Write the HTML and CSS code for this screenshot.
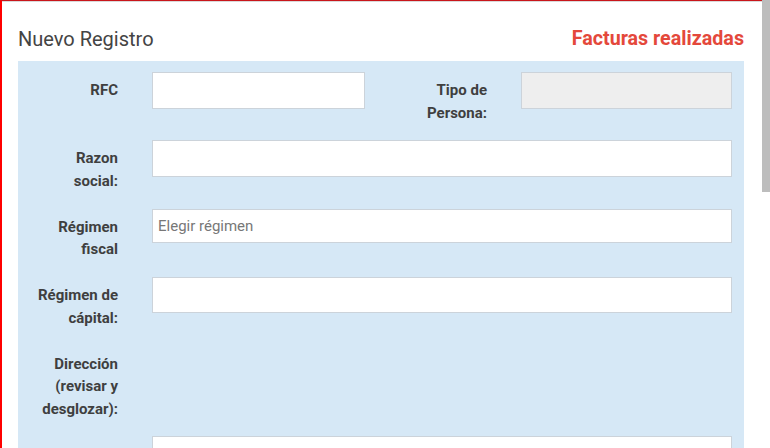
FILE: index.html
```html
<!DOCTYPE html>
<html lang="es">
<head>
<meta charset="utf-8">
<title>Nuevo Registro</title>
<link rel="stylesheet" href="styles.css">
</head>
<body>
<div class="page">
  <div class="frame">
    <div class="head">
      <h2 class="title">Nuevo Registro</h2>
      <a class="link" href="#">Facturas realizadas</a>
    </div>
    <form class="panel">
      <label class="lbl">RFC</label>
      <input class="field h37" type="text">
      <label class="lbl">Tipo de Persona:</label>
      <input class="field h37 disabled" type="text" disabled>

      <label class="lbl">Razon social:</label>
      <input class="field h37 wide" type="text">

      <label class="lbl">Régimen fiscal</label>
      <input class="field h34 wide" type="text" placeholder="Elegir régimen">

      <label class="lbl">Régimen de cápital:</label>
      <input class="field h36 wide" type="text">

      <label class="lbl">Dirección (revisar y desglozar):</label>
      <div class="wide"></div>

      <label class="lbl">Calle:</label>
      <input class="field h37 wide" type="text">

      <label class="lbl">Número exterior:</label>
      <input class="field h37 wide" type="text">

      <label class="lbl">Número interior:</label>
      <input class="field h37 wide" type="text">

      <label class="lbl">Colonia:</label>
      <input class="field h37 wide" type="text">
    </form>
  </div>
  <div class="scrollbar" aria-hidden="true">
    <div class="thumb"></div>
  </div>
</div>
</body>
</html>
```
FILE: styles.css
```css
html, body {
  margin: 0;
  padding: 0;
  height: 100%;
  overflow: hidden;
  background: #ffffff;
}

body {
  font-family: Roboto, "Liberation Sans", sans-serif;
  color: #444444;
}

.page {
  display: flex;
  width: 770px;
  height: 448px;
  overflow: hidden;
  background: #ffffff;
}

.frame {
  flex: 1;
  min-width: 0;
  border-left: 2px solid #ff0000;
  border-top: 1px solid #c9151b;
  box-shadow: inset 0 1px 0 #d9d9d9;
  padding: 26px 18px 0 16px;
}

.scrollbar {
  flex: 0 0 8px;
  background: #ffffff;
}

.thumb {
  height: 192px;
  background: #bdbdbd;
}

.head {
  display: flex;
  justify-content: space-between;
  align-items: center;
  height: 24px;
  margin: 0 0 10px 0;
}

.title {
  margin: 0;
  font-size: 20px;
  font-weight: 400;
  line-height: 24px;
  color: #444444;
}

.link {
  font-size: 19.7px;
  font-weight: 700;
  line-height: 24px;
  color: #e4483b;
  text-decoration: none;
}

.panel {
  display: grid;
  grid-template-columns: 100px 213px 88px 211px;
  column-gap: 34px;
  row-gap: 16.4px;
  align-items: start;
  background: #d6e8f6;
  padding: 11px 12px 20px 0;
  margin: 0;
}

.lbl {
  box-sizing: border-box;
  padding: 7px 0 0 15px;
  font-size: 15px;
  font-weight: 700;
  line-height: 22.5px;
  text-align: right;
  color: #3f3f3f;
}

.field {
  box-sizing: border-box;
  margin: 0;
  width: 100%;
  border: 1px solid #ccd3da;
  border-radius: 0;
  background: #ffffff;
  padding: 0 5px;
  font-family: Roboto, "Liberation Sans", sans-serif;
  font-size: 15px;
  color: #444444;
  outline: none;
}

.field::placeholder {
  color: #777777;
}

.field.disabled {
  background: #eeeeee;
}

.wide {
  grid-column: 2 / -1;
}

.h37 { height: 37px; }
.h36 { height: 36px; }
.h34 { height: 34px; }
```
